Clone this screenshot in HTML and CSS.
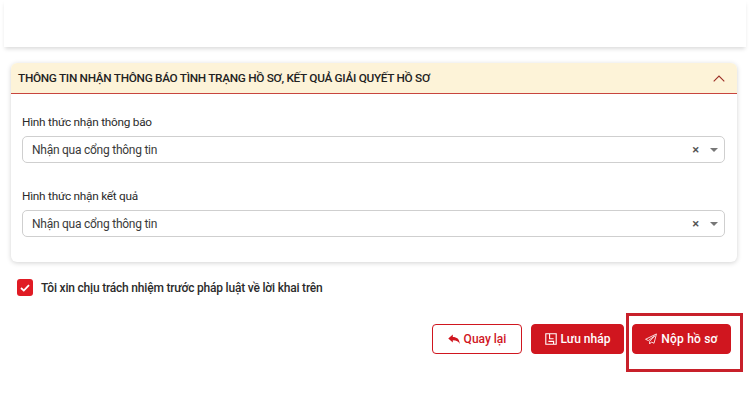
FILE: index.html
```html
<!DOCTYPE html>
<html lang="vi">
<head>
    <meta charset="UTF-8">
    <meta name="viewport" content="width=device-width, initial-scale=1.0">
    <link rel="stylesheet" href="styles.css">
    <title>Nộp hồ sơ</title>
</head>
<body>
    <div class="top-panel"></div>

    <div class="card">
        <div class="card-header">
            <span class="card-title">THÔNG TIN NHẬN THÔNG BÁO TÌNH TRẠNG HỒ SƠ, KẾT QUẢ GIẢI QUYẾT HỒ SƠ</span>
            <svg class="chevron" width="12" height="7" viewBox="0 0 12 7"><path d="M0.7 6.3 L6 1 L11.3 6.3" fill="none" stroke="#9c2f26" stroke-width="1.1"/></svg>
        </div>
        <div class="card-body">
            <div class="field">
                <label class="field-label">Hình thức nhận thông báo</label>
                <div class="select">
                    <span class="select-value">Nhận qua cổng thông tin</span>
                    <span class="select-clear">×</span>
                    <span class="select-arrow"></span>
                </div>
            </div>
            <div class="field">
                <label class="field-label">Hình thức nhận kết quả</label>
                <div class="select">
                    <span class="select-value">Nhận qua cổng thông tin</span>
                    <span class="select-clear">×</span>
                    <span class="select-arrow"></span>
                </div>
            </div>
        </div>
    </div>

    <div class="agree">
        <span class="checkbox">
            <svg width="10" height="8" viewBox="0 0 10 8"><path d="M1 4 L3.8 6.6 L9 1.2" fill="none" stroke="#fff" stroke-width="1.8"/></svg>
        </span>
        <span class="agree-text">Tôi xin chịu trách nhiệm trước pháp luật về lời khai trên</span>
    </div>

    <div class="actions">
        <button class="btn btn-outline">
            <svg width="12" height="11" viewBox="0 0 13 11"><path d="M0.3 4.4 L5.2 0.2 V2.7 C9.6 2.8 12.4 4.6 12.7 10.4 C11.4 7.4 9.4 6.4 5.2 6.3 V8.7 Z" fill="#d0161f"/></svg>
            Quay lại
        </button>
        <button class="btn">
            <svg width="12" height="12" viewBox="0 0 12 12"><path d="M0.8 0.8 H11.2 V11.2 H0.8 Z M4.6 0.8 V5.8 H8.6 M3.4 8.4 H8.6 V11.2" fill="none" stroke="#fff" stroke-width="1.1"/></svg>
            Lưu nháp
        </button>
        <button class="btn btn-submit">
            <svg width="12" height="12" viewBox="0 0 13 12"><path d="M12.4 0.5 L0.6 6.3 L3.6 7.7 L10.6 2.6 L5 8.5 V11.4 L6.9 9.3 L9.8 10.6 Z" fill="none" stroke="#fff" stroke-width="0.9" stroke-linejoin="round"/></svg>
            <span class="btn-wide">Nộp hồ sơ</span>
        </button>
        <div class="highlight"></div>
    </div>
</body>
</html>
```

FILE: styles.css
```css
body {
    margin: 0;
    height: 400px;
    overflow: hidden;
    background-color: #fff;
    font-family: Roboto, "Liberation Sans", sans-serif;
    color: #212529;
}

.top-panel {
    height: 47px;
    margin: 0 4px 16px;
    background-color: #fff;
    box-shadow: 0 3px 4px -1px rgba(0, 0, 0, 0.14);
}

.card {
    margin: 0 13px 0 11px;
    height: 199px;
    border-radius: 6px;
    background-color: #fff;
    box-shadow: 0 1px 5px rgba(0, 0, 0, 0.18);
}

.card-header {
    display: flex;
    align-items: center;
    justify-content: space-between;
    height: 30px;
    padding: 0 12px 0 7px;
    background-color: #fdf3d8;
    border-bottom: 1px solid #c8453e;
    border-radius: 6px 6px 0 0;
}

.card-title {
    font-size: 11.8px;
    font-weight: 500;
    letter-spacing: -0.3px;
    color: #222;
}

.card-body {
    padding: 20px 12px 0 11px;
}

.field {
    margin-bottom: 25px;
}

.field-label {
    display: block;
    margin-bottom: 6px;
    font-size: 11.8px;
    line-height: 16px;
    letter-spacing: -0.25px;
    color: #2b2b2b;
}

.select {
    display: flex;
    align-items: center;
    height: 25px;
    padding: 0 6px 0 9px;
    border: 1px solid #cfcfcf;
    border-radius: 5px;
    font-size: 12px;
    letter-spacing: -0.25px;
    color: #3a3a3a;
}

.select-value {
    flex: 1;
}

.select-clear {
    margin-right: 11px;
    font-size: 13px;
    font-weight: 500;
    color: #555;
}

.select-arrow {
    width: 0;
    height: 0;
    border-left: 4px solid transparent;
    border-right: 4px solid transparent;
    border-top: 4px solid #777;
}

.agree {
    display: flex;
    align-items: center;
    gap: 8px;
    margin: 17px 0 0 17px;
}

.checkbox {
    display: flex;
    align-items: center;
    justify-content: center;
    width: 16px;
    height: 17px;
    background-color: #e01b24;
    border-radius: 3px;
}

.agree-text {
    font-size: 12px;
    font-weight: 500;
    letter-spacing: -0.2px;
    color: #2b2b2b;
}

.actions {
    position: relative;
    display: flex;
    justify-content: flex-end;
    gap: 8px;
    margin: 28px 19px 0 0;
}

.btn {
    display: flex;
    align-items: center;
    justify-content: center;
    gap: 4px;
    width: 93px;
    height: 30px;
    padding: 0;
    border: 1px solid #d0161f;
    border-radius: 4px;
    background-color: #d0161f;
    color: #fff;
    font-family: inherit;
    font-size: 12px;
    font-weight: 500;
    cursor: pointer;
}

.btn-outline {
    width: 90px;
    margin-right: 1px;
    background-color: #fff;
    color: #d0161f;
}

.btn-submit {
    width: 99px;
}

.btn-wide {
    letter-spacing: 0.2px;
}

.highlight {
    position: absolute;
    top: -11px;
    right: -12px;
    width: 111px;
    height: 53px;
    border: 3px solid #c8202a;
}
```
